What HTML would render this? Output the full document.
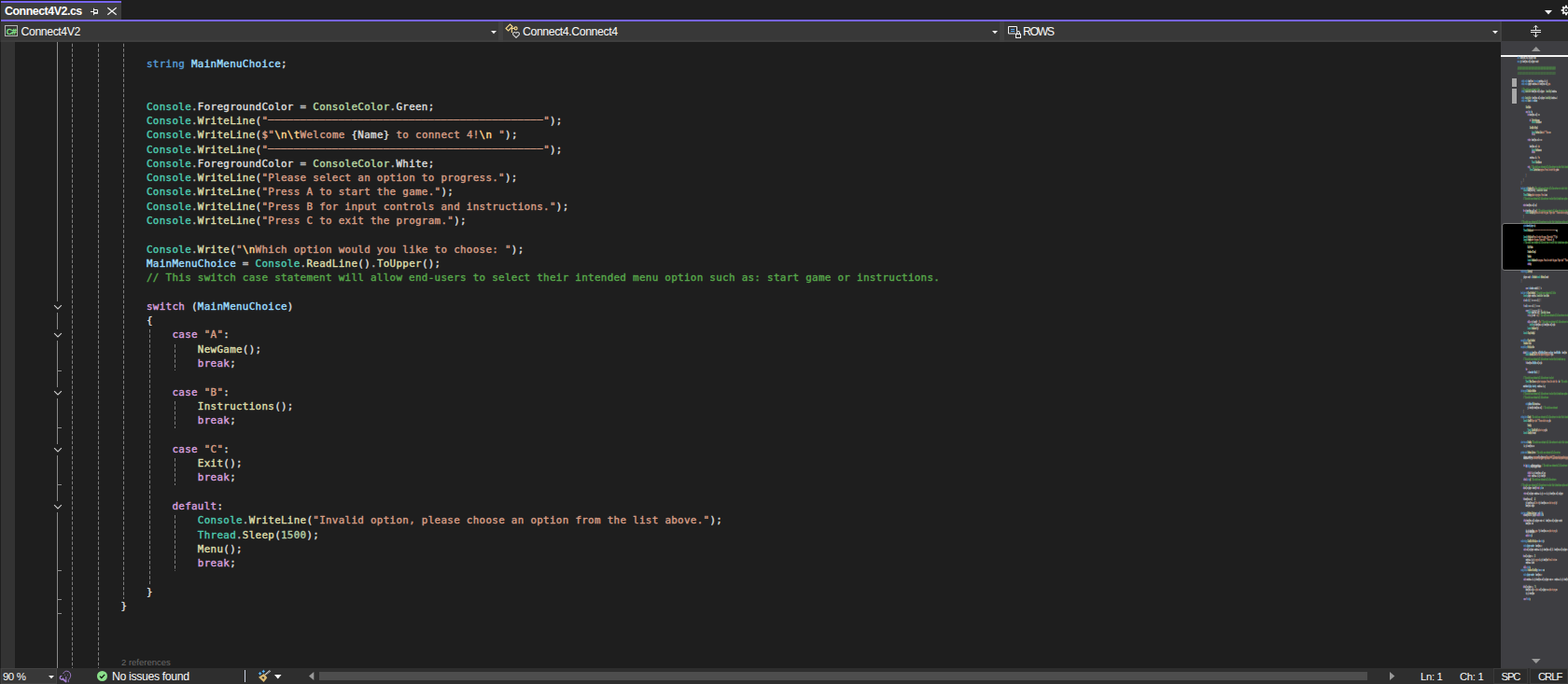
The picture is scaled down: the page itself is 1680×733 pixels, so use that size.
<!DOCTYPE html>
<html lang="en">
<head>
<meta charset="utf-8">
<title>Connect4V2.cs</title>
<style>
html,body{margin:0;padding:0;}
body{width:1680px;height:733px;overflow:hidden;background:#1e1e1e;position:relative;font-family:"Liberation Sans",sans-serif;font-size:12px;color:#fafafa;}
div,svg,span{box-sizing:border-box;}
.abs,.ln,.gd,.ol,.chev,.tick,.ui{position:absolute;}
.ui{white-space:pre;line-height:16px;color:#fafafa;}
/* code */
.ln{white-space:pre;font-family:"DejaVu Sans Mono","Liberation Mono",monospace;font-size:10.8px;letter-spacing:0.356px;line-height:15.27px;height:15.27px;color:#dcdcdc;-webkit-text-stroke:0.4px currentColor;}
.dd{display:inline-block;letter-spacing:-3.385px;transform-origin:0 50%;transform:translate(-3.72px,-2px) scaleX(2.2);margin-right:160.86px;-webkit-text-stroke:0.3px currentColor;}
.k{color:#569cd6}.v{color:#9cdcfe}.t{color:#4ec9b0}.o{color:#b4b4b4}.w{color:#dcdcdc}.e{color:#b8d7a3}
.m{color:#dcdcaa}.p{color:#dcdcdc}.s{color:#d69d85}.x{color:#ffd68f}.c{color:#57a64a}.f{color:#d8a0df}.n{color:#b5cea8}
.gd{width:1px;background-image:linear-gradient(to bottom,#7c7c7c 0,#7c7c7c 3.6px,transparent 3.6px,transparent 5.4px);background-size:1px 5.4px;}
.ol{width:1px;background:#8a8a8a;}
.tick{width:5px;height:1px;background:#8a8a8a;}
.mm{position:absolute;left:17.6px;white-space:pre;font-family:"DejaVu Sans Mono","Liberation Mono",monospace;font-size:10px;line-height:10px;height:10px;color:#dcdcdc;transform-origin:0 0;transform:scale(0.0901,0.34);font-weight:bold;-webkit-text-stroke:1.1px currentColor;}
.mm .k{color:#528bbb}.mm .v{color:#8bc0dc}.mm .t{color:#4bb09c}.mm .e{color:#a2bb92}.mm .m{color:#c0c097}.mm .p{color:#c0c0c0}.mm .s{color:#bb8c79}.mm .c{color:#529349}.mm .f{color:#bc8ec3}.mm .n{color:#a0b496}.mm .g{color:#9f9f9f}
.mm .b{color:#8c8c8c}
</style>
</head>
<body>
<!-- tab strip -->
<div class="abs" style="left:0;top:0;width:1680px;height:21px;background:#1f1f1f"></div>
<div class="abs" style="left:1px;top:1px;width:129px;height:20px;background:#3d3d3d;border-top:2px solid #7764f0"></div>
<div class="ui" style="left:5px;top:3.5px;font-size:12.4px;font-weight:bold;letter-spacing:-0.47px;color:#ffffff">Connect4V2.cs</div>
<svg class="abs" style="left:96px;top:8px" width="10" height="9" viewBox="0 0 10 9"><path d="M1 4.5h3.5" fill="none" stroke="#f0f0f0" stroke-width="1"/><path d="M4.5 0.8v7.4" fill="none" stroke="#f0f0f0" stroke-width="1"/><path d="M5 2.5h3.5v3.5h-3.5" fill="none" stroke="#f0f0f0" stroke-width="1"/><path d="M5 6h4" fill="none" stroke="#f0f0f0" stroke-width="1.6"/></svg>
<svg class="abs" style="left:114px;top:7px" width="12" height="10" viewBox="0 0 12 10"><path d="M1.3 1.2l9.4 7.6M10.7 1.2l-9.4 7.6" fill="none" stroke="#f0f0f0" stroke-width="1.25"/></svg>
<!-- top right -->
<svg class="abs" style="left:1655px;top:10.5px" width="8" height="5" viewBox="0 0 8 5"><path d="M0 0h8l-4 4.5z" fill="#f0f0f0"/></svg>
<svg class="abs" style="left:1671.6px;top:5px" width="12" height="12" viewBox="-6 -6 12 12"><g fill="#f0f0f0"><circle r="3.7"/><rect x="-1" y="-5.3" width="2" height="10.6"/><rect x="-1" y="-5.3" width="2" height="10.6" transform="rotate(45)"/><rect x="-1" y="-5.3" width="2" height="10.6" transform="rotate(90)"/><rect x="-1" y="-5.3" width="2" height="10.6" transform="rotate(135)"/></g><circle r="2.3" fill="#1f1f1f"/><circle r="1.1" fill="#f0f0f0"/><circle r="0.5" fill="#1f1f1f"/></svg>
<!-- purple line -->
<div class="abs" style="left:1px;top:21px;width:1679px;height:2px;background:#7764f0"></div>
<!-- nav bar -->
<div class="abs" style="left:0;top:23px;width:1608px;height:22px;background:#383838;border-bottom:2px solid #3e3e3e"></div>
<div class="abs" style="left:0;top:23px;width:1px;height:22px;background:#2d2d2d"></div>
<div class="abs" style="left:534px;top:23px;width:5px;height:22px;background:#414141"></div>
<div class="abs" style="left:1071px;top:23px;width:5px;height:22px;background:#414141"></div>
<div class="abs" style="left:1607px;top:23px;width:2px;height:22px;background:#414141"></div>
<div class="abs" style="left:5px;top:27px;width:14px;height:12px;border:1px solid #b4b4b4"></div>
<div class="ui" style="left:6.7px;top:27.6px;font-size:8.8px;line-height:12px;color:#84e388;letter-spacing:-0.3px;-webkit-text-stroke:0.35px #84e388">C#</div>
<div class="ui" style="left:22.5px;top:26px;font-size:12.3px;letter-spacing:-0.42px">Connect4V2</div>
<svg class="abs" style="left:526px;top:33px" width="6" height="4" viewBox="0 0 6 4"><path d="M0 0h6l-3 3.3z" fill="#f0f0f0"/></svg>
<!-- class icon -->
<svg class="abs" style="left:540px;top:24px" width="20" height="20" viewBox="540 24 20 20">
<path d="M542.1 30.4L546.5 26l2.5 2.5-4.4 4.4z" fill="none" stroke="#f7d98e" stroke-width="1.15"/>
<path d="M547.6 30.4h3.4M548.4 30.4v4.6" fill="none" stroke="#f7d98e" stroke-width="1.15"/>
<circle cx="552.6" cy="30.4" r="1.5" fill="none" stroke="#f7d98e" stroke-width="1.15"/>
<path d="M553 40.4l-3.3-3.2a1.7 1.7 0 0 1 3.3-1.6a1.7 1.7 0 0 1 3.3 1.6z" fill="#383838" stroke="#d6d6d6" stroke-width="1.1" stroke-linejoin="round"/>
</svg>
<div class="ui" style="left:560px;top:26px;font-size:12.3px;letter-spacing:-0.42px">Connect4.Connect4</div>
<svg class="abs" style="left:1063px;top:33px" width="6" height="4" viewBox="0 0 6 4"><path d="M0 0h6l-3 3.3z" fill="#f0f0f0"/></svg>
<!-- field icon -->
<svg class="abs" style="left:1078px;top:26px" width="18" height="16" viewBox="1078 26 18 16">
<path d="M1088 36h-7.5v-7.5h9v5" fill="none" stroke="#f0f0f0" stroke-width="1"/>
<path d="M1083 31.5h4M1083 33.5h4" fill="none" stroke="#55aaff" stroke-width="1"/>
<rect x="1088.5" y="36.5" width="5" height="4" fill="#383838" stroke="#f0f0f0" stroke-width="1"/>
<path d="M1089.6 36.5v-1.4a1.4 1.6 0 0 1 2.8 0v1.4" fill="none" stroke="#f0f0f0" stroke-width="1.2"/>
</svg>
<div class="ui" style="left:1096px;top:26px;font-size:12.3px;letter-spacing:-1.45px">ROWS</div>
<svg class="abs" style="left:1598.5px;top:33px" width="6" height="4" viewBox="0 0 6 4"><path d="M0 0h6l-3 3.3z" fill="#f0f0f0"/></svg>
<!-- split button -->
<div class="abs" style="left:1609px;top:23px;width:71px;height:21px;background:#2d2d2d"></div>
<svg class="abs" style="left:1638px;top:26px" width="15" height="15" viewBox="1638 26 15 15">
<path d="M1640 32.5h11M1640 34.5h11" fill="none" stroke="#e8e8e8" stroke-width="1"/>
<path d="M1645.5 27.5v4.5M1645.5 35v4.5" fill="none" stroke="#e8e8e8" stroke-width="1"/>
<path d="M1643.3 29.6l2.2-2.4 2.2 2.4M1643.3 37.4l2.2 2.4 2.2-2.4" fill="none" stroke="#e8e8e8" stroke-width="1"/>
</svg>
<!-- left margin -->
<div class="abs" style="left:1px;top:45px;width:15px;height:671px;background:#333333"></div>
<div class="gd" style="left:77.00px;top:45.00px;height:671.00px;background-position:0 -3.70px"></div>
<div class="gd" style="left:105.00px;top:45.00px;height:671.00px;background-position:0 -3.70px"></div>
<div class="gd" style="left:132.00px;top:45.00px;height:596.95px;background-position:0 -3.70px"></div>
<div class="gd" style="left:160.00px;top:352.65px;height:274.10px;background-position:0 -0.00px"></div>
<div class="gd" style="left:187.00px;top:368.85px;height:28.60px;background-position:0 -0.00px"></div>
<div class="gd" style="left:187.00px;top:430.05px;height:28.60px;background-position:0 -0.00px"></div>
<div class="gd" style="left:187.00px;top:491.25px;height:28.60px;background-position:0 -0.00px"></div>
<div class="gd" style="left:187.00px;top:552.45px;height:59.20px;background-position:0 -0.00px"></div>
<div class="ol" style="left:61px;top:45px;height:671px"></div>
<svg class="chev" style="left:56px;top:322.80px" width="12" height="12" viewBox="0 0 12 12"><rect x="0" y="0" width="12" height="12" fill="#1e1e1e"/><path d="M2.1 4.2 L6 7.9 L9.9 4.2" fill="none" stroke="#d0d0d0" stroke-width="1.1"/></svg>
<svg class="chev" style="left:56px;top:353.40px" width="12" height="12" viewBox="0 0 12 12"><rect x="0" y="0" width="12" height="12" fill="#1e1e1e"/><path d="M2.1 4.2 L6 7.9 L9.9 4.2" fill="none" stroke="#d0d0d0" stroke-width="1.1"/></svg>
<svg class="chev" style="left:56px;top:414.60px" width="12" height="12" viewBox="0 0 12 12"><rect x="0" y="0" width="12" height="12" fill="#1e1e1e"/><path d="M2.1 4.2 L6 7.9 L9.9 4.2" fill="none" stroke="#d0d0d0" stroke-width="1.1"/></svg>
<svg class="chev" style="left:56px;top:475.80px" width="12" height="12" viewBox="0 0 12 12"><rect x="0" y="0" width="12" height="12" fill="#1e1e1e"/><path d="M2.1 4.2 L6 7.9 L9.9 4.2" fill="none" stroke="#d0d0d0" stroke-width="1.1"/></svg>
<svg class="chev" style="left:56px;top:537.00px" width="12" height="12" viewBox="0 0 12 12"><rect x="0" y="0" width="12" height="12" fill="#1e1e1e"/><path d="M2.1 4.2 L6 7.9 L9.9 4.2" fill="none" stroke="#d0d0d0" stroke-width="1.1"/></svg>
<div class="tick" style="left:61px;top:397px"></div>
<div class="tick" style="left:61px;top:458px"></div>
<div class="tick" style="left:61px;top:519px"></div>
<div class="tick" style="left:61px;top:611px"></div>
<div class="tick" style="left:61px;top:642px"></div>
<div class="tick" style="left:61px;top:657px"></div>
<div class="ln" style="top:60.70px;left:157.00px"><span class="k">string</span><span class="p"> </span><span class="v">MainMenuChoice</span><span class="p">;</span></div>
<div class="ln" style="top:106.60px;left:157.00px"><span class="t">Console</span><span class="o">.</span><span class="w">ForegroundColor</span><span class="o"> = </span><span class="e">ConsoleColor</span><span class="o">.</span><span class="w">Green</span><span class="p">;</span></div>
<div class="ln" style="top:121.90px;left:157.00px"><span class="t">Console</span><span class="o">.</span><span class="m">WriteLine</span><span class="p">(</span><span class="s">"<span class="dd">-------------------------------------------</span>"</span><span class="p">);</span></div>
<div class="ln" style="top:137.20px;left:157.00px"><span class="t">Console</span><span class="o">.</span><span class="m">WriteLine</span><span class="p">(</span><span class="s">$"</span><span class="x">\n\t</span><span class="s">Welcome </span><span class="p">{</span><span class="w">Name</span><span class="p">}</span><span class="s"> to connect 4!</span><span class="x">\n</span><span class="s"> "</span><span class="p">);</span></div>
<div class="ln" style="top:152.50px;left:157.00px"><span class="t">Console</span><span class="o">.</span><span class="m">WriteLine</span><span class="p">(</span><span class="s">"<span class="dd">-------------------------------------------</span>"</span><span class="p">);</span></div>
<div class="ln" style="top:167.80px;left:157.00px"><span class="t">Console</span><span class="o">.</span><span class="w">ForegroundColor</span><span class="o"> = </span><span class="e">ConsoleColor</span><span class="o">.</span><span class="w">White</span><span class="p">;</span></div>
<div class="ln" style="top:183.10px;left:157.00px"><span class="t">Console</span><span class="o">.</span><span class="m">WriteLine</span><span class="p">(</span><span class="s">"Please select an option to progress."</span><span class="p">);</span></div>
<div class="ln" style="top:198.40px;left:157.00px"><span class="t">Console</span><span class="o">.</span><span class="m">WriteLine</span><span class="p">(</span><span class="s">"Press A to start the game."</span><span class="p">);</span></div>
<div class="ln" style="top:213.70px;left:157.00px"><span class="t">Console</span><span class="o">.</span><span class="m">WriteLine</span><span class="p">(</span><span class="s">"Press B for input controls and instructions."</span><span class="p">);</span></div>
<div class="ln" style="top:229.00px;left:157.00px"><span class="t">Console</span><span class="o">.</span><span class="m">WriteLine</span><span class="p">(</span><span class="s">"Press C to exit the program."</span><span class="p">);</span></div>
<div class="ln" style="top:259.60px;left:157.00px"><span class="t">Console</span><span class="o">.</span><span class="m">Write</span><span class="p">(</span><span class="s">"</span><span class="x">\n</span><span class="s">Which option would you like to choose: "</span><span class="p">);</span></div>
<div class="ln" style="top:274.90px;left:157.00px"><span class="v">MainMenuChoice</span><span class="o"> = </span><span class="t">Console</span><span class="o">.</span><span class="m">ReadLine</span><span class="p">()</span><span class="o">.</span><span class="m">ToUpper</span><span class="p">();</span></div>
<div class="ln" style="top:290.20px;left:157.00px"><span class="c">// This switch case statement will allow end-users to select their intended menu option such as: start game or instructions.</span></div>
<div class="ln" style="top:320.80px;left:157.00px"><span class="f">switch</span><span class="p"> (</span><span class="v">MainMenuChoice</span><span class="p">)</span></div>
<div class="ln" style="top:336.10px;left:157.00px"><span class="p">{</span></div>
<div class="ln" style="top:351.40px;left:184.43px"><span class="f">case</span><span class="p"> </span><span class="s">"A"</span><span class="p">:</span></div>
<div class="ln" style="top:366.70px;left:211.86px"><span class="m">NewGame</span><span class="p">();</span></div>
<div class="ln" style="top:382.00px;left:211.86px"><span class="f">break</span><span class="p">;</span></div>
<div class="ln" style="top:412.60px;left:184.43px"><span class="f">case</span><span class="p"> </span><span class="s">"B"</span><span class="p">:</span></div>
<div class="ln" style="top:427.90px;left:211.86px"><span class="m">Instructions</span><span class="p">();</span></div>
<div class="ln" style="top:443.20px;left:211.86px"><span class="f">break</span><span class="p">;</span></div>
<div class="ln" style="top:473.80px;left:184.43px"><span class="f">case</span><span class="p"> </span><span class="s">"C"</span><span class="p">:</span></div>
<div class="ln" style="top:489.10px;left:211.86px"><span class="m">Exit</span><span class="p">();</span></div>
<div class="ln" style="top:504.40px;left:211.86px"><span class="f">break</span><span class="p">;</span></div>
<div class="ln" style="top:535.00px;left:184.43px"><span class="f">default</span><span class="p">:</span></div>
<div class="ln" style="top:550.30px;left:211.86px"><span class="t">Console</span><span class="o">.</span><span class="m">WriteLine</span><span class="p">(</span><span class="s">"Invalid option, please choose an option from the list above."</span><span class="p">);</span></div>
<div class="ln" style="top:565.60px;left:211.86px"><span class="t">Thread</span><span class="o">.</span><span class="m">Sleep</span><span class="p">(</span><span class="n">1500</span><span class="p">);</span></div>
<div class="ln" style="top:580.90px;left:211.86px"><span class="m">Menu</span><span class="p">();</span></div>
<div class="ln" style="top:596.20px;left:211.86px"><span class="f">break</span><span class="p">;</span></div>
<div class="ln" style="top:626.80px;left:157.00px"><span class="p">}</span></div>
<div class="ln" style="top:642.10px;left:129.56px"><span class="p">}</span></div><!-- minimap -->
<div class="abs" id="minimap" style="left:1608px;top:44px;width:72px;height:672px;background:#3e3e42;overflow:hidden">
<svg class="abs" style="left:32.5px;top:6px" width="10" height="5" viewBox="0 0 10 5"><path d="M0 5h9.6l-4.8-5z" fill="#999"/></svg>
<div class="abs" style="left:0;top:15px;width:72px;height:2px;background:#f4f4f4"></div>
<div class="abs" style="left:12px;top:40px;width:5px;height:9px;background:#a8a8a8"></div>
<div class="abs" style="left:12px;top:51px;width:5px;height:16px;background:#a8a8a8"></div>
<div class="abs" style="left:0.5px;top:194.8px;width:74px;height:51.5px;background:#000;border:1px solid #7a7a7a;border-radius:3px"></div>
<div class="mm" style="top:15.98px"><span class="k">int n</span> <span class="p">board[row, col] = player; coun</span></div>
<div class="mm" style="top:20.24px"><span class="k">new p</span> <span class="p">y); board[row, col] = player; count</span></div>
<div class="mm" style="top:26.70px"><span class="c">///////////////////////////////////////////////////////////////////////////</span></div>
<div class="mm" style="top:28.09px"><span class="c">///////////////////////////////////////////////////////////////////////////</span></div>
<div class="mm" style="top:32.92px"><span class="c">///////////////////////////////////////////////////////////////////////////</span></div>
<div class="mm" style="top:41.11px">        <span class="k">static void s</span><span class="p">board[row,</span> <span class="k">true using</span><span class="p">counter++; (x, y)</span></div>
<div class="mm" style="top:44.21px">        <span class="k">static void s</span><span class="p">player; counter++</span><span class="s">wins!</span> <span class="p">board[row, col]</span> <span class="s">game.</span></div>
<div class="mm" style="top:50.11px">        <span class="c">// This switch case statement will a</span></div>
<div class="mm" style="top:52.23px">        <span class="k">string </span><span class="e">ConsoleColor </span><span class="p">board[row, col] = player; </span>  <span class="e">ConsoleKey C</span><span class="p">counter++</span></div>
<div class="mm" style="top:59.11px">        <span class="k">static </span><span class="e">ConsoleColor </span> <span class="p">board[row, col] = player;</span> <span class="e">ConsoleKey C</span><span class="p">counter++; (</span></div>
<div class="mm" style="top:61.97px">        <span class="k">static void </span><span class="m">Check</span><span class="k">void st</span><span class="p">col</span><span class="v">coun</span></div>
<div class="mm" style="top:68.93px">                <span class="m">CheckWin</span><span class="p">bo</span></div>
<div class="mm" style="top:74.04px">                <span class="f">case </span><span class="p">(x</span><span class="k">new </span><span class="p">bo</span></div>
<div class="mm" style="top:77.00px">                    <span class="f">bre</span> <span class="p">board[row, col]</span> <span class="g">&gt;= =</span></div>
<div class="mm" style="top:82.92px">                        <span class="f">wh</span>  <span class="m">Instructions</span><span class="p">cou</span></div>
<div class="mm" style="top:85.12px">                            <span class="t">Console </span><span class="m">CheckWi</span><span class="p">boar</span></div>
<div class="mm" style="top:91.23px">                        <span class="m">CheckWin Write</span><span class="p">pl</span></div>
<div class="mm" style="top:96.01px">                            <span class="t">Console </span><span class="m">NewGame In</span><span class="p">bo</span><span class="s">wins!" "Please </span><span class="p">co</span></div>
<div class="mm" style="top:98.21px">                            <span class="f">for d</span><span class="p">c</span></div>
<div class="mm" style="top:104.22px">                    <span class="f">return </span> <span class="p">board[row, col</span> <span class="g">&gt;= ==</span></div>
<div class="mm" style="top:111.10px">                        <span class="p">board[row, col</span>  <span class="s">wins</span></div>
<div class="mm" style="top:115.21px">                            <span class="t">Console </span><span class="m">NewGame</span><span class="p">coun</span></div>
<div class="mm" style="top:116.74px">                            <span class="f">defau</span><span class="p">c</span></div>
<div class="mm" style="top:123.04px">                        <span class="p">counter++; (x,</span>  <span class="s">Pres</span></div>
<div class="mm" style="top:128.01px">                            <span class="t">Thread C</span><span class="m">CheckWi</span><span class="p">coun</span></div>
<div class="mm" style="top:133.12px">                    <span class="f">retu</span>  <span class="c">// This switch case statement will allow end-users to select their intended</span></div>
<div class="mm" style="top:135.51px">                        <span class="t">Thread C</span><span class="m">Instructio</span><span class="p">co</span><span class="s">progress. Press A to start the game</span><span class="p">bo</span></div>
<div class="mm" style="top:141.72px">                <span class="b">} </span></div>
<div class="mm" style="top:146.97px">           <span class="b">} </span></div>
<div class="mm" style="top:149.83px">       <span class="b">} </span></div>
<div class="mm" style="top:156.04px">       <span class="k">bool char tru</span><span class="m">DrawBoard C</span><span class="p">p</span><span class="c">// This switch case statement will allow end-users to select their in</span></div>
<div class="mm" style="top:157.95px">            <span class="t">Console </span><span class="p">board[row, col] </span>  <span class="e">ConsoleColor Conso</span><span class="p">co</span></div>
<div class="mm" style="top:163.21px">            <span class="t">Thread C</span><span class="m">NewGam</span><span class="p">p</span><span class="s">option to progress. Press A </span><span class="p">cou</span></div>
<div class="mm" style="top:167.03px">           <span class="c">// This switch case statement will allow end-users to select their intended menu option su</span></div>
<div class="mm" style="top:173.90px">           <span class="f">return</span> <span class="p">board[row, col] = pl</span></div>
<div class="mm" style="top:179.92px">           <span class="f">for de</span> <span class="p">board[row, col] = pl</span> <span class="c">// This switch case statement will allow end-users to select t</span></div>
<div class="mm" style="top:182.02px">                <span class="t">Console </span><span class="m">CheckWin </span><span class="p">pl</span><span class="s">Press A to start the game. Player wins!" "Please select an opti</span><span class="p">y</span></div>
<div class="mm" style="top:185.65px">           <span class="b">} </span></div>
<div class="mm" style="top:191.86px">       <span class="c">// This switch case statement will allow end-users to select their intended menu option such a</span></div>
<div class="mm" style="top:196.21px">            <span class="k">private</span><span class="v">board player c</span><span class="p">(x</span></div>
<div class="mm" style="top:201.16px">            <span class="t">Thread C</span><span class="m">WriteLine </span><span class="p">b</span><span class="s">---------------------------------------------</span><span class="p">= p</span></div>
<div class="mm" style="top:208.19px">            <span class="t">Console </span><span class="m">WriteLine </span><span class="p">b</span><span class="s">Press A to start the game. Player wins!" "Pl</span> <span class="p">y);</span></div>
<div class="mm" style="top:211.07px">            <span class="t">Console </span><span class="m">DrawBo</span><span class="p">p</span><span class="s">start the game. Player wins!" "Please sel</span>  <span class="p">y)</span></div>
<div class="mm" style="top:214.23px">            <span class="c">// This switch case statement will allow end-users to select their intended menu option </span></div>
<div class="mm" style="top:219.18px">                    <span class="m">Exit Men</span><span class="p">bo</span></div>
<div class="mm" style="top:224.14px">                    <span class="m">DrawBoard Chec</span><span class="p">pl</span></div>
<div class="mm" style="top:229.09px">                    <span class="m">NewGa</span><span class="p">(x</span></div>
<div class="mm" style="top:233.15px">                    <span class="t">Console </span><span class="m">DrawBoard </span><span class="p">b</span><span class="s">to progress. Press A to start the game. Player wins!" "Please</span></div>
<div class="mm" style="top:237.20px">                    <span class="f">defaul</span><span class="p">p</span></div>
<div class="mm" style="top:245.08px">       <span class="k">void string i</span><span class="m">Instruc</span><span class="p">pl</span></div>
<div class="mm" style="top:250.62px">            <span class="p">player; count</span>  <span class="k">usi</span><span class="m">DrawBoar</span><span class="t">Console </span><span class="m">NewGame In</span><span class="p">count</span></div>
<div class="mm" style="top:254.82px">       <span class="b">} </span></div>
<div class="mm" style="top:263.22px">                <span class="f">ca</span> <span class="p">= </span><span class="k">true</span><span class="p">boar</span><span class="v">boa</span> <span class="p">counte</span><span class="g">&amp;&amp; || != </span></div>
<div class="mm" style="top:268.19px">       <span class="k">bool char tru</span><span class="m">Sleep DrawBoa</span><span class="p">pl</span><span class="c">// This switch case statement will allow </span></div>
<div class="mm" style="top:271.34px">            <span class="t">Console </span><span class="p">player; counter+</span>  <span class="e">ConsoleColor ConsoleKe</span><span class="p">bo</span></div>
<div class="mm" style="top:276.31px">            <span class="f">wh</span> <span class="p">col</span><span class="k">voi</span><span class="g">&amp;&amp; || != &gt;= == &lt;= &amp;&amp; || !</span></div>
<div class="mm" style="top:282.13px">            <span class="f">fo</span> <span class="p">col</span><span class="k">sta</span><span class="g">&gt;= == &lt;= &amp;&amp; || != &gt;= ==</span></div>
<div class="mm" style="top:287.10px">                <span class="f">ca</span> <span class="p">co</span><span class="k">stri</span><span class="g">|| != &gt;= == &lt;= &amp;&amp; || != </span></div>
<div class="mm" style="top:289.20px">                    <span class="t">Console </span><span class="p">board[row, col] </span>  <span class="e">ConsoleKey Conso</span><span class="p">co</span></div>
<div class="mm" style="top:292.35px">                    <span class="f">re</span> <span class="p">(x, y); boar</span>   <span class="s">wi</span><span class="g">|| </span><span class="c">// This switch case statement will allow end-users to sele</span></div>
<div class="mm" style="top:299.04px">                    <span class="f">while e</span> <span class="p">y); board[r</span>   <span class="s">Pla</span> <span class="c">// This switch case statement will allow end-users to s</span></div>
<div class="mm" style="top:302.19px">                        <span class="t">Console </span><span class="p">y); board[row, c</span> <span class="p">y); board[row, col] = pla</span></div>
<div class="mm" style="top:306.20px">                    <span class="t">Console </span><span class="m">DrawBoard C</span><span class="p">y)</span></div>
<div class="mm" style="top:311.18px">            <span class="t">Console </span><span class="m">Sleep DrawBo</span><span class="p">pl</span></div>
<div class="mm" style="top:319.10px">       <span class="k">new public pr</span><span class="m">Sleep DrawBoa</span><span class="p">b</span></div>
<div class="mm" style="top:322.16px">            <span class="m">DrawBoard Che</span><span class="p">(x</span></div>
<div class="mm" style="top:326.27px">       <span class="k">new public pr</span><span class="m">WriteLine R</span><span class="p">co</span></div>
<div class="mm" style="top:332.19px">           <span class="f">whi</span><span class="p">col</span><span class="k">public priva</span><span class="p">board[row, col]</span><span class="v">MainMenuC</span><span class="p">player; co</span> <span class="v">player</span>  <span class="p">board</span> <span class="v">MainMen</span>   <span class="p">board[row</span></div>
<div class="mm" style="top:334.39px">                <span class="t">Console </span><span class="m">NewGame I</span><span class="p">co</span><span class="s">select an option to progress. Pr</span><span class="p">pla</span></div>
<div class="mm" style="top:339.16px">           <span class="c">// This switch case statement will allow end-users to select their intended menu op</span></div>
<div class="mm" style="top:343.17px">                <span class="f">fo</span> <span class="p">board[row,</span> <span class="v">MainMen</span> <span class="p">col] = pla</span></div>
<div class="mm" style="top:350.15px">                <span class="f">for </span></div>
<div class="mm" style="top:353.20px">                    <span class="f">re</span> <span class="p">bo</span><span class="v">counter Nam</span> <span class="g">&amp;&amp; || !</span></div>
<div class="mm" style="top:359.22px">           <span class="c">// This switch case statement will allow end-users to select</span></div>
<div class="mm" style="top:363.23px">                <span class="t">Thread C</span><span class="m">Menu Slee</span><span class="p">co</span><span class="s">an option to progress. Press A to start the </span>  <span class="p">bo</span> <span class="c">// This switch ca</span></div>
<div class="mm" style="top:368.10px">           <span class="p">counte</span><span class="v">board playe</span>  <span class="v">board p</span>  <span class="p">counter++; (x, y</span></div>
<div class="mm" style="top:373.07px">       <span class="k">int new publi</span><span class="m">ReadLine NewGa</span><span class="p">bo</span></div>
<div class="mm" style="top:376.42px">           <span class="c">// This switch case statement will allow end-users to select their intended menu option s</span></div>
<div class="mm" style="top:380.24px">           <span class="c">// This switch case statement will allow end-users</span></div>
<div class="mm" style="top:387.12px">                <span class="k">stati</span><span class="p">pla</span><span class="v">Name Ma</span><span class="m">Inst</span><span class="p">counter++; </span></div>
<div class="mm" style="top:391.22px">                    <span class="p">y); board[ro</span> <span class="p">board[row, col]</span>  <span class="c">// This switch case statement</span></div>
<div class="mm" style="top:395.04px">           <span class="b">{ </span></div>
<div class="mm" style="top:401.25px">       <span class="k">string int ne</span><span class="m">Check</span><span class="p">p</span><span class="c">// This switch case statement will allow end-users to select their intended</span></div>
<div class="mm" style="top:405.07px">            <span class="t">Console </span><span class="m">CheckW</span><span class="p">b</span><span class="s">Player wins!" "Please select an op</span> <span class="p">pla</span></div>
<div class="mm" style="top:410.13px">                    <span class="m">ReadLi</span><span class="p">y</span></div>
<div class="mm" style="top:415.10px">                    <span class="t">Thread C</span><span class="m">CheckWin W</span><span class="p">pl</span><span class="s">option to progr</span><span class="p">pla</span></div>
<div class="mm" style="top:418.16px">            <span class="t">Console </span><span class="m">CheckWin W</span> <span class="p">count</span></div>
<div class="mm" style="top:428.28px">       <span class="k">char true usi</span><span class="m">DrawBo</span><span class="p">p</span><span class="c">// This switch case statement will allow end-users to select their intende</span></div>
<div class="mm" style="top:432.10px">            <span class="p">(x, y); board[row, </span><span class="p">co</span></div>
<div class="mm" style="top:439.18px">       <span class="k">private bool </span><span class="m">NewGame Instr</span><span class="p">co</span> <span class="c">// This switch case statement will allow end-use</span></div>
<div class="mm" style="top:444.14px">            <span class="p">player; counter++; </span><span class="s">progress</span><span class="p">col] = player; co</span><span class="s">Player wins!" "Please select an option to pro</span></div>
<div class="mm" style="top:445.29px">            <span class="p">counter++; (x, y); </span><span class="s">A to start the game. Player wins!" "Please select an option to progres</span></div>
<div class="mm" style="top:452.55px">            <span class="f">de</span>  <span class="p">bo</span><span class="k">static </span> <span class="p">= player; counter++;</span>  <span class="c">// This switch case statement will allow end-users to</span></div>
<div class="mm" style="top:453.89px">                <span class="f">sw</span> <span class="k">string</span> <span class="p">col] = player; count</span></div>
<div class="mm" style="top:460.95px">                    <span class="f">default</span> <span class="p">(x, y); board[row, col] = p</span></div>
<div class="mm" style="top:464.11px">                    <span class="f">return </span> <span class="p">counter++; (x, y); board[ro</span></div>
<div class="mm" style="top:468.12px">            <span class="f">defaul</span> <span class="k">int n</span><span class="p">pl</span><span class="c">// This switch case statement will allow end-users </span></div>
<div class="mm" style="top:474.13px">       <span class="c">// This switch case statement will allow end-users to select their intended menu option such a</span></div>
<div class="mm" style="top:477.00px">           <span class="f">whi</span><span class="p">col] = player;</span>  <span class="p">board[r</span> <span class="f">break </span> <span class="k">publ</span><span class="p">co</span></div>
<div class="mm" style="top:483.11px">            <span class="f">retur</span> <span class="p">col] = player; counter++; (x, y);</span> <span class="g">&gt;= =</span> <span class="p">(x, y); board[row, col] = player; </span></div>
<div class="mm" style="top:489.13px">           <span class="f">for</span><span class="p">board[row, col] </span>   <span class="n">42</span></div>
<div class="mm" style="top:492.95px">                <span class="p">y); board[row, col</span> <span class="s">A to st</span> <span class="p">y); board[row, co</span> <span class="s">select an opti</span> <span class="p">y)</span></div>
<div class="mm" style="top:496.10px">                <span class="p">board[row, col</span><span class="p">pla</span></div>
<div class="mm" style="top:504.13px">       <span class="k">char true usi</span><span class="m">NewGame Instruc</span><span class="p">co</span><span class="k">tru</span> <span class="p">col</span><span class="k">publ</span><span class="p">(x,</span></div>
<div class="mm" style="top:506.33px">           <span class="f">ret</span><span class="p">board[row, col</span>  <span class="p">player;</span> <span class="f">switch</span> <span class="k">new </span><span class="p">bo</span></div>
<div class="mm" style="top:512.06px">            <span class="f">defau</span> <span class="p">board[row, col] = player; coun</span> <span class="g">&lt;= &amp;</span>   <span class="p">board[row, col] = player; counte</span></div>
<div class="mm" style="top:515.21px">                <span class="p">board[row, c</span> <span class="p">bo</span></div>
<div class="mm" style="top:523.04px">                <span class="p">(x, y); board[row,</span> <span class="s">game. P</span> <span class="p">y); board[row, co</span> <span class="s">option to prog</span> <span class="p">(x</span></div>
<div class="mm" style="top:524.19px">                <span class="p">(x, y); board[row,</span></div>
<div class="mm" style="top:528.30px">                <span class="f">switch</span> <span class="k">bool</span><span class="p">pl</span></div>
<div class="mm" style="top:534.31px">       <span class="k">void string i</span><span class="m">CheckWin WriteLine </span><span class="p">c</span><span class="k">voi</span><span class="p">bo</span> <span class="k">stat</span><span class="p">y);</span></div>
<div class="mm" style="top:539.28px">            <span class="k">static</span> <span class="v">player counter </span>  <span class="p">board[row, c</span></div>
<div class="mm" style="top:543.10px">            <span class="f">switc</span> <span class="p">col] = player; counter++; (x, y); board[row, col]</span> <span class="g">&amp;&amp;</span>   <span class="p">board[row, col] = player; co</span></div>
<div class="mm" style="top:550.26px">           <span class="f">bre</span><span class="p">col] = player; c</span>   <span class="n">15</span></div>
<div class="mm" style="top:554.08px">                <span class="p">counter++; (x, y);</span> <span class="s">progres</span> <span class="p">(x, y); board[row</span> <span class="s">Press A to sta</span> <span class="p">= </span></div>
<div class="mm" style="top:557.14px">                <span class="p">counter++; (x,</span><span class="p">cou</span></div>
<div class="mm" style="top:562.20px">            <span class="f">while </span> <span class="k">stati</span><span class="p">p</span></div>
<div class="mm" style="top:565.08px">       <span class="k">using static </span><span class="m">DrawBoard CheckWin</span><span class="p">y</span><span class="k">priv</span><span class="p">co</span> <span class="k">new </span><span class="p">cou</span></div>
<div class="mm" style="top:570.33px">            <span class="k">void s</span> <span class="v">player counter </span>  <span class="p">board[row, c</span></div>
<div class="mm" style="top:575.30px">            <span class="f">switc</span> <span class="p">counter++; (x, y); board[row, col] = player; coun</span> <span class="g">==</span>   <span class="p">counter++; (x, y); board[row</span></div>
<div class="mm" style="top:583.22px">           <span class="f">def</span><span class="p">col] = player; c</span>   <span class="n">7 6</span></div>
<div class="mm" style="top:586.28px">                <span class="p">board[row, col] = </span> <span class="s">option </span> <span class="p">col] = player; co</span> <span class="s">option to prog</span> <span class="p">co</span></div>
<div class="mm" style="top:590.19px">                <span class="p">(x, y); board[</span><span class="p">boa</span></div>
<div class="mm" style="top:596.31px">            <span class="f">case f</span> <span class="k">stati</span><span class="p">p</span></div><svg class="abs" style="left:32.5px;top:662px" width="10" height="5" viewBox="0 0 10 5"><path d="M0 0h9.6l-4.8 5z" fill="#999"/></svg>
</div>
<!-- status bar -->
<div class="abs" style="left:0;top:716px;width:1680px;height:17px;background:#2e2e2e"></div>
<div class="abs" style="left:1px;top:716px;width:60px;height:17px;background:#383838;border:1px solid #434343"></div>
<div class="ui" style="left:3px;top:717.3px;font-size:11.5px;letter-spacing:-0.6px;word-spacing:0.6px">90 %</div>
<svg class="abs" style="left:51.7px;top:724px" width="6" height="4" viewBox="0 0 6 4"><path d="M0 0h6l-3 3.3z" fill="#f0f0f0"/></svg>
<!-- intellicode icon -->
<svg class="abs" style="left:63px;top:717px" width="14" height="16" viewBox="63 717 14 16">
<path d="M67.6 722C68.5 720 70 719.2 71.3 719.2C74 719.2 75.8 721.2 75.7 724C75.6 726 74.4 727.4 73.3 728.6V731.2" fill="none" stroke="#a57fd2" stroke-width="1" stroke-opacity="0.9"/>
<path d="M70.8 725V731.2" fill="none" stroke="#a57fd2" stroke-width="1.1" stroke-opacity="0.9"/>
<path d="M69.2 723.3h0.9M72 723.3h0.9" fill="none" stroke="#a57fd2" stroke-width="0.9" stroke-opacity="0.8"/>
<path d="M66.6 727.1l4.4 3.7" fill="none" stroke="#a57fd2" stroke-width="1.9"/>
<path d="M66.3 724.4a1.9 1.9 0 1 0 1.6 2.6" fill="none" stroke="#a57fd2" stroke-width="1.4"/>
</svg>

<svg class="abs" style="left:104px;top:719px" width="11" height="11" viewBox="0 0 11 11"><circle cx="5.5" cy="5.5" r="5.5" fill="#8be08b"/><path d="M2.9 5.6l1.9 1.9 3.4-3.6" fill="none" stroke="#111" stroke-width="1.3"/></svg>
<div class="ui" style="left:120px;top:717.3px;font-size:12.3px;letter-spacing:-0.36px">No issues found</div>
<div class="abs" style="left:262px;top:718px;width:1px;height:13px;background:#ccd4e4"></div>
<!-- brush icon -->
<svg class="abs" style="left:275px;top:716px" width="17" height="17" viewBox="275 716 17 17">
<path d="M284.2 722.9l5.6-4.4" stroke="#e8e8e8" stroke-width="1.8" stroke-dasharray="0.9 0.5" fill="none"/>
<path d="M277 725.7l5.9-3.8 3.4 4.3-3.7 4.8z" fill="#dcbb74"/>
<path d="M280.4 725.9l1.7-0.9 1.2 1.5-1 1.3z" fill="#2e2e2e"/>
<path d="M278.6 719.7l0.75 1.25 1.25 0.75-1.25 0.75-0.75 1.25-0.75-1.25-1.25-0.75 1.25-0.75z" fill="#55b5ff"/>
<path d="M282.3 717.6l0.7 1.2 1.2 0.7-1.2 0.7-0.7 1.2-0.7-1.2-1.2-0.7 1.2-0.7z" fill="#55b5ff"/>
</svg>
<svg class="abs" style="left:294px;top:722.7px" width="8" height="5" viewBox="0 0 8 5"><path d="M0 0h7.5l-3.75 4.5z" fill="#ffffff"/></svg>
<svg class="abs" style="left:331px;top:720px" width="6" height="9" viewBox="0 0 6 9"><path d="M5.3 0v9l-5.3-4.5z" fill="#999"/></svg>
<div class="abs" style="left:342px;top:720px;width:1123px;height:9px;background:#4d4d4d"></div>
<svg class="abs" style="left:1489px;top:720px" width="6" height="9" viewBox="0 0 6 9"><path d="M0 0v9l5.3-4.5z" fill="#999"/></svg>
<div class="ui" style="left:1522px;top:716.8px;font-size:11.3px;letter-spacing:-0.33px">Ln: 1</div>
<div class="ui" style="left:1564px;top:716.8px;font-size:11.3px;letter-spacing:-0.33px">Ch: 1</div>
<div class="abs" style="left:1600px;top:716px;width:37px;height:17px;background:#2b2b2b;border:1px solid #3a3a3a"></div>
<div class="ui" style="left:1608.6px;top:716.8px;font-size:11.3px;letter-spacing:-1.2px">SPC</div>
<div class="abs" style="left:1639px;top:716px;width:41px;height:17px;background:#2b2b2b;border:1px solid #3a3a3a"></div>
<div class="ui" style="left:1648px;top:716.8px;font-size:11.3px;letter-spacing:-1.07px">CRLF</div>
<div class="ui" style="left:130px;top:703px;font-size:9.5px;line-height:14px;color:#6a6a6a">2 references</div>
</body></html>
